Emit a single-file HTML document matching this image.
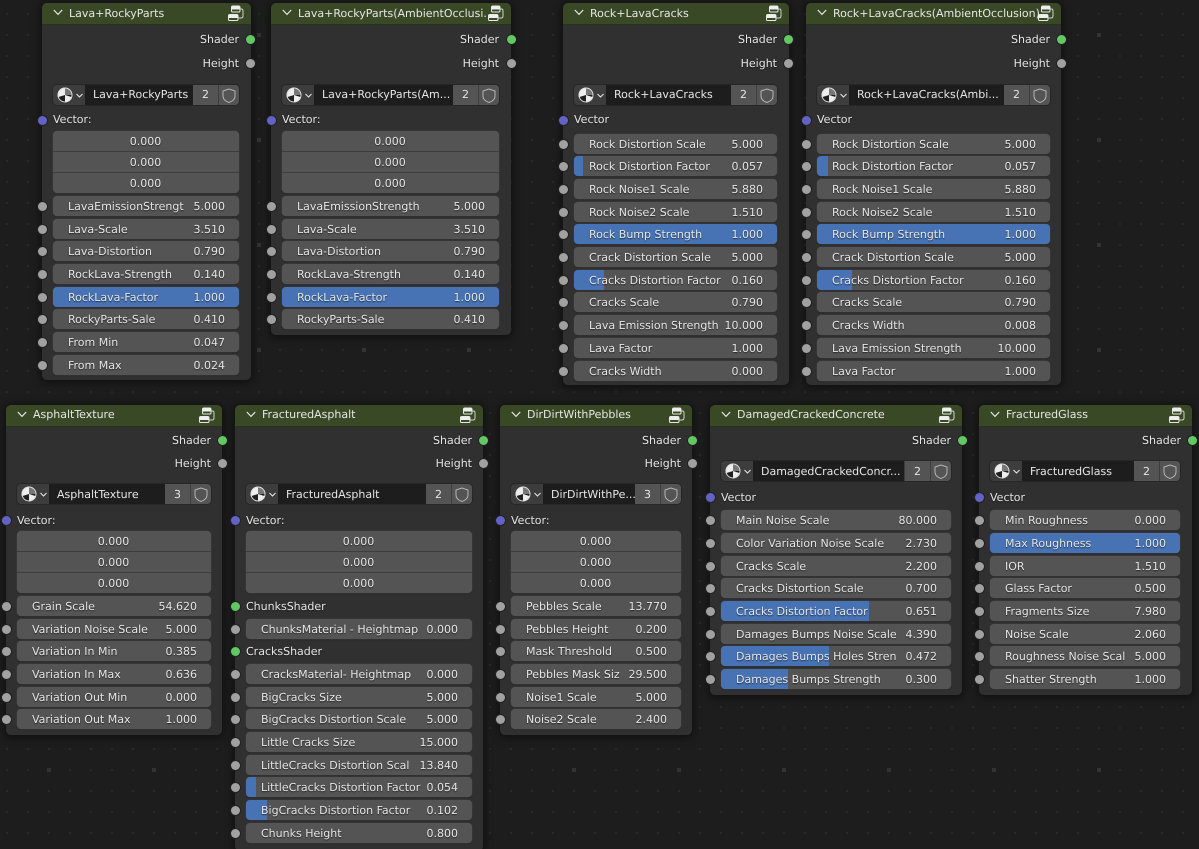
<!DOCTYPE html>
<html><head><meta charset="utf-8"><style>
html,body{margin:0;padding:0;width:1199px;height:849px;overflow:hidden;background:#1d1d1d}
body{position:relative;font:11px/22px "DejaVu Sans",sans-serif;color:#e6e6e6;text-rendering:geometricPrecision}
#bg{position:absolute;left:0;top:0}
.n{position:absolute;background:#303030;border-radius:5px;box-shadow:0 1px 8px 2px rgba(0,0,0,.45)}
.h{position:absolute;left:0;right:0;top:0;height:21px;background:#3a4925;border-radius:5px 5px 0 0;box-shadow:0 1px 0 #293319;line-height:22px;padding-left:27px;white-space:nowrap;overflow:hidden}
.h svg{position:absolute;left:11px;top:6px}
.h svg.g{left:auto;right:7px;top:2px}
.o{position:absolute;height:20px;white-space:nowrap;text-shadow:0 1px 1px rgba(0,0,0,.45)}
.t{text-align:right}
.r{position:absolute;height:20px;z-index:0;background:#545454;border-radius:4px;box-shadow:0 0 0 .5px #3d3d3d,0 1px 1px rgba(0,0,0,.3);padding-left:15px;box-sizing:border-box;white-space:nowrap;text-shadow:0 1px 1px rgba(0,0,0,.6)}
.r span{position:absolute;right:14px;top:0}
.r b{position:absolute;left:0;top:0;bottom:0;z-index:-1;background:#4772b3;border-radius:4px 0 0 4px}
.r b.f{border-radius:4px;right:0}
.z{padding:0 1px 0 0;text-align:center;border-radius:0}
.z1{border-radius:4px 4px 0 0}.z3{border-radius:0 0 4px 4px}
.k::before,.s{content:"";position:absolute;width:9px;height:9px;border-radius:50%;background:#a1a1a1;box-shadow:0 0 0 1px #222}
.k::before{left:-15.5px;top:5.5px}
.s{margin:-4.5px 0 0 -4.5px;z-index:2}
.s.v{background:#6363c7}.s.c{background:#63c763}
.m{position:absolute;height:20px;background:#3d3d3d;border-radius:4px;box-shadow:0 0 0 1px #262626}
.m i{position:absolute;top:0;height:20px;line-height:20px;font-style:normal;text-align:center;background:#545454;box-sizing:border-box}
.l2 ~ .m i{line-height:22px}
.m i.a{left:32px;background:#1d1d1d;text-align:left;padding-left:8px;white-space:nowrap;overflow:hidden}
.m svg{position:absolute}
.l2 .h{line-height:19px}
</style></head><body>
<svg id="bg" width="1199" height="849"><defs>
<pattern id="d" x="6" y="13" width="21" height="21" patternUnits="userSpaceOnUse"><rect width="2" height="2" fill="#282828"/></pattern>
<pattern id="e" x="47" y="33" width="105" height="105" patternUnits="userSpaceOnUse"><rect width="4" height="4" fill="#333"/></pattern>
<symbol id="chev" viewBox="0 0 10 7"><path d="M.8 1 5 5.400 9.200 1" fill="none" stroke="#e6e6e6" stroke-width="1.2"/></symbol>
<symbol id="grp" viewBox="0 0 16 16"><rect x="3.500" y="1" width="8.500" height="6" rx="1.300" fill="none" stroke="#e6e6e6" stroke-width="1"/><path d="M3.500 2.300q0-1.300 1.300-1.300h5.900q1.300 0 1.300 1.300v2.200H3.500Z" fill="#eee"/><rect x=".5" y="9.500" width="9.500" height="6" rx="1.300" fill="none" stroke="#e6e6e6" stroke-width="1"/><path d="M.5 10.800q0-1.300 1.300-1.300h6.900q1.300 0 1.300 1.300v2.200H.5Z" fill="#eee"/><path d="M12 4h1.500q1.500 0 1.500 2v5q0 2-2 2h-3" fill="none" stroke="#d0d0d0" stroke-width="1"/></symbol>
<symbol id="mat" viewBox="0 0 30 16"><circle cx="8" cy="8" r="7.500" fill="#1f1f1f"/><path d="M8 .5A7.500 7.500 0 0 0 .8 10.200L8 8Z" fill="#eee"/><path d="M8 8 8 .5A7.500 7.500 0 0 1 15.500 8Z" fill="#777"/><path d="M8 8 15.200 10.200A7.500 7.500 0 0 1 8 15.500Z" fill="#eee"/><circle cx="8" cy="8" r="7" fill="none" stroke="#ddd" stroke-width="1"/><path d="M19.500 7l3 3 3-3" fill="none" stroke="#e6e6e6" stroke-width="1.100"/></symbol>
<symbol id="sh" viewBox="0 0 14 15"><path d="M7 1 1 3v5c0 3.500 3 5.500 6 6.500 3-1 6-3 6-6.500V3Z" fill="none" stroke="#b5b5b5" stroke-width="1"/></symbol>
</defs><rect width="1199" height="849" fill="#1d1d1d"/><rect width="1199" height="849" fill="url(#d)"/><rect width="1199" height="849" fill="url(#e)"/></svg>

<!-- Node 1 -->
<div class="n" style="left:42px;top:3px;width:209px;height:377px"><div class="h">Lava+RockyParts<svg width="10" height="7"><use href="#chev"/></svg><svg class="g" width="16" height="16"><use href="#grp"/></svg></div></div>
<div class="o t" style="left:140px;width:99px;top:29px">Shader</div><div class="o t" style="left:140px;width:99px;top:53px">Height</div>
<i class="s c" style="left:250px;top:39px"></i><i class="s" style="left:250px;top:63px"></i>
<div class="m" style="left:53px;top:85px;width:186px"><svg style="left:4px;top:2px" width="30" height="16"><use href="#mat"/></svg><i class="a" style="width:108px">Lava+RockyParts</i><i style="left:140px;width:25px">2</i><i style="left:166px;width:20px;border-radius:0 4px 4px 0"><svg style="left:3px;top:3px" width="14" height="15"><use href="#sh"/></svg></i></div>
<i class="s v" style="left:42px;top:120px"></i><div class="o" style="left:53px;top:109px">Vector:</div>
<div class="r z z1" style="left:53px;top:131px;width:186px">0.000</div><div class="r z" style="left:53px;top:152px;width:186px">0.000</div><div class="r z z3" style="left:53px;top:173px;width:186px">0.000</div>
<div class="r k" style="left:53px;top:196px;width:186px">LavaEmissionStrengt<span>5.000</span></div>
<div class="r k" style="left:53px;top:219px;width:186px">Lava-Scale<span>3.510</span></div>
<div class="r k" style="left:53px;top:241px;width:186px">Lava-Distortion<span>0.790</span></div>
<div class="r k" style="left:53px;top:264px;width:186px">RockLava-Strength<span>0.140</span></div>
<div class="r k" style="left:53px;top:287px;width:186px"><b class="f"></b>RockLava-Factor<span>1.000</span></div>
<div class="r k" style="left:53px;top:309px;width:186px">RockyParts-Sale<span>0.410</span></div>
<div class="r k" style="left:53px;top:332px;width:186px">From Min<span>0.047</span></div>
<div class="r k" style="left:53px;top:355px;width:186px">From Max<span>0.024</span></div>

<!-- Node 2 -->
<div class="n" style="left:271px;top:3px;width:240px;height:332px"><div class="h">Lava+RockyParts(AmbientOcclusi...<svg width="10" height="7"><use href="#chev"/></svg><svg class="g" width="16" height="16"><use href="#grp"/></svg></div></div>
<div class="o t" style="left:400px;width:99px;top:29px">Shader</div><div class="o t" style="left:400px;width:99px;top:53px">Height</div>
<i class="s c" style="left:511px;top:39px"></i><i class="s" style="left:511px;top:63px"></i>
<div class="m" style="left:282px;top:85px;width:217px"><svg style="left:4px;top:2px" width="30" height="16"><use href="#mat"/></svg><i class="a" style="width:139px">Lava+RockyParts(Am...</i><i style="left:171px;width:25px">2</i><i style="left:197px;width:20px;border-radius:0 4px 4px 0"><svg style="left:3px;top:3px" width="14" height="15"><use href="#sh"/></svg></i></div>
<i class="s v" style="left:271px;top:120px"></i><div class="o" style="left:282px;top:109px">Vector:</div>
<div class="r z z1" style="left:282px;top:131px;width:217px">0.000</div><div class="r z" style="left:282px;top:152px;width:217px">0.000</div><div class="r z z3" style="left:282px;top:173px;width:217px">0.000</div>
<div class="r k" style="left:282px;top:196px;width:217px">LavaEmissionStrength<span>5.000</span></div>
<div class="r k" style="left:282px;top:219px;width:217px">Lava-Scale<span>3.510</span></div>
<div class="r k" style="left:282px;top:241px;width:217px">Lava-Distortion<span>0.790</span></div>
<div class="r k" style="left:282px;top:264px;width:217px">RockLava-Strength<span>0.140</span></div>
<div class="r k" style="left:282px;top:287px;width:217px"><b class="f"></b>RockLava-Factor<span>1.000</span></div>
<div class="r k" style="left:282px;top:309px;width:217px">RockyParts-Sale<span>0.410</span></div>

<!-- Node 3 -->
<div class="n" style="left:563px;top:3px;width:226px;height:382px"><div class="h">Rock+LavaCracks<svg width="10" height="7"><use href="#chev"/></svg><svg class="g" width="16" height="16"><use href="#grp"/></svg></div></div>
<div class="o t" style="left:678px;width:99px;top:29px">Shader</div><div class="o t" style="left:678px;width:99px;top:53px">Height</div>
<i class="s c" style="left:788px;top:39px"></i><i class="s" style="left:788px;top:63px"></i>
<div class="m" style="left:574px;top:85px;width:203px"><svg style="left:4px;top:2px" width="30" height="16"><use href="#mat"/></svg><i class="a" style="width:125px">Rock+LavaCracks</i><i style="left:157px;width:25px">2</i><i style="left:183px;width:20px;border-radius:0 4px 4px 0"><svg style="left:3px;top:3px" width="14" height="15"><use href="#sh"/></svg></i></div>
<i class="s v" style="left:563px;top:120px"></i><div class="o" style="left:574px;top:109px">Vector</div>
<div class="r k" style="left:574px;top:134px;width:203px">Rock Distortion Scale<span>5.000</span></div>
<div class="r k" style="left:574px;top:156px;width:203px"><b style="width:9px"></b>Rock Distortion Factor<span>0.057</span></div>
<div class="r k" style="left:574px;top:179px;width:203px">Rock Noise1 Scale<span>5.880</span></div>
<div class="r k" style="left:574px;top:202px;width:203px">Rock Noise2 Scale<span>1.510</span></div>
<div class="r k" style="left:574px;top:224px;width:203px"><b class="f"></b>Rock Bump Strength<span>1.000</span></div>
<div class="r k" style="left:574px;top:247px;width:203px">Crack Distortion Scale<span>5.000</span></div>
<div class="r k" style="left:574px;top:270px;width:203px"><b style="width:30px"></b>Cracks Distortion Factor<span>0.160</span></div>
<div class="r k" style="left:574px;top:292px;width:203px">Cracks Scale<span>0.790</span></div>
<div class="r k" style="left:574px;top:315px;width:203px">Lava Emission Strength<span>10.000</span></div>
<div class="r k" style="left:574px;top:338px;width:203px">Lava Factor<span>1.000</span></div>
<div class="r k" style="left:574px;top:361px;width:203px">Cracks Width<span>0.000</span></div>

<!-- Node 4 -->
<div class="n" style="left:806px;top:3px;width:255px;height:382px"><div class="h">Rock+LavaCracks(AmbientOcclusion)<svg width="10" height="7"><use href="#chev"/></svg><svg class="g" width="16" height="16"><use href="#grp"/></svg></div></div>
<div class="o t" style="left:951px;width:99px;top:29px">Shader</div><div class="o t" style="left:951px;width:99px;top:53px">Height</div>
<i class="s c" style="left:1061px;top:39px"></i><i class="s" style="left:1061px;top:63px"></i>
<div class="m" style="left:817px;top:85px;width:233px"><svg style="left:4px;top:2px" width="30" height="16"><use href="#mat"/></svg><i class="a" style="width:155px">Rock+LavaCracks(Ambi...</i><i style="left:187px;width:25px">2</i><i style="left:213px;width:20px;border-radius:0 4px 4px 0"><svg style="left:3px;top:3px" width="14" height="15"><use href="#sh"/></svg></i></div>
<i class="s v" style="left:806px;top:120px"></i><div class="o" style="left:817px;top:109px">Vector</div>
<div class="r k" style="left:817px;top:134px;width:233px">Rock Distortion Scale<span>5.000</span></div>
<div class="r k" style="left:817px;top:156px;width:233px"><b style="width:11px"></b>Rock Distortion Factor<span>0.057</span></div>
<div class="r k" style="left:817px;top:179px;width:233px">Rock Noise1 Scale<span>5.880</span></div>
<div class="r k" style="left:817px;top:202px;width:233px">Rock Noise2 Scale<span>1.510</span></div>
<div class="r k" style="left:817px;top:224px;width:233px"><b class="f"></b>Rock Bump Strength<span>1.000</span></div>
<div class="r k" style="left:817px;top:247px;width:233px">Crack Distortion Scale<span>5.000</span></div>
<div class="r k" style="left:817px;top:270px;width:233px"><b style="width:35px"></b>Cracks Distortion Factor<span>0.160</span></div>
<div class="r k" style="left:817px;top:292px;width:233px">Cracks Scale<span>0.790</span></div>
<div class="r k" style="left:817px;top:315px;width:233px">Cracks Width<span>0.008</span></div>
<div class="r k" style="left:817px;top:338px;width:233px">Lava Emission Strength<span>10.000</span></div>
<div class="r k" style="left:817px;top:361px;width:233px">Lava Factor<span>1.000</span></div>

<!-- Node 5 -->
<div class="n l2" style="left:6px;top:405px;width:216px;height:330px"><div class="h">AsphaltTexture<svg width="10" height="7"><use href="#chev"/></svg><svg class="g" width="16" height="16"><use href="#grp"/></svg></div></div>
<div class="o t" style="left:112px;width:99px;top:430px">Shader</div><div class="o t" style="left:112px;width:99px;top:453px">Height</div>
<i class="s c" style="left:222px;top:440px"></i><i class="s" style="left:222px;top:463px"></i>
<div class="m" style="left:17px;top:484px;width:194px"><svg style="left:4px;top:2px" width="30" height="16"><use href="#mat"/></svg><i class="a" style="width:116px">AsphaltTexture</i><i style="left:148px;width:25px">3</i><i style="left:174px;width:20px;border-radius:0 4px 4px 0"><svg style="left:3px;top:3px" width="14" height="15"><use href="#sh"/></svg></i></div>
<i class="s v" style="left:6px;top:520px"></i><div class="o" style="left:17px;top:510px">Vector:</div>
<div class="r z z1" style="left:17px;top:531px;width:194px">0.000</div><div class="r z" style="left:17px;top:552px;width:194px">0.000</div><div class="r z z3" style="left:17px;top:573px;width:194px">0.000</div>
<div class="r k" style="left:17px;top:596px;width:194px">Grain Scale<span>54.620</span></div>
<div class="r k" style="left:17px;top:619px;width:194px">Variation Noise Scale<span>5.000</span></div>
<div class="r k" style="left:17px;top:641px;width:194px">Variation In Min<span>0.385</span></div>
<div class="r k" style="left:17px;top:664px;width:194px">Variation In Max<span>0.636</span></div>
<div class="r k" style="left:17px;top:687px;width:194px">Variation Out Min<span>0.000</span></div>
<div class="r k" style="left:17px;top:709px;width:194px">Variation Out Max<span>1.000</span></div>

<!-- Node 6 -->
<div class="n l2" style="left:235px;top:405px;width:248px;height:446px"><div class="h">FracturedAsphalt<svg width="10" height="7"><use href="#chev"/></svg><svg class="g" width="16" height="16"><use href="#grp"/></svg></div></div>
<div class="o t" style="left:373px;width:99px;top:430px">Shader</div><div class="o t" style="left:373px;width:99px;top:453px">Height</div>
<i class="s c" style="left:483px;top:440px"></i><i class="s" style="left:483px;top:463px"></i>
<div class="m" style="left:246px;top:484px;width:226px"><svg style="left:4px;top:2px" width="30" height="16"><use href="#mat"/></svg><i class="a" style="width:148px">FracturedAsphalt</i><i style="left:180px;width:25px">2</i><i style="left:206px;width:20px;border-radius:0 4px 4px 0"><svg style="left:3px;top:3px" width="14" height="15"><use href="#sh"/></svg></i></div>
<i class="s v" style="left:235px;top:520px"></i><div class="o" style="left:246px;top:510px">Vector:</div>
<div class="r z z1" style="left:246px;top:531px;width:226px">0.000</div><div class="r z" style="left:246px;top:552px;width:226px">0.000</div><div class="r z z3" style="left:246px;top:573px;width:226px">0.000</div>
<i class="s c" style="left:235px;top:606px"></i><div class="o" style="left:246px;top:596px">ChunksShader</div>
<div class="r k" style="left:246px;top:619px;width:226px">ChunksMaterial - Heightmap<span>0.000</span></div>
<i class="s c" style="left:235px;top:651px"></i><div class="o" style="left:246px;top:641px">CracksShader</div>
<div class="r k" style="left:246px;top:664px;width:226px">CracksMaterial- Heightmap<span>0.000</span></div>
<div class="r k" style="left:246px;top:687px;width:226px">BigCracks Size<span>5.000</span></div>
<div class="r k" style="left:246px;top:709px;width:226px">BigCracks Distortion Scale<span>5.000</span></div>
<div class="r k" style="left:246px;top:732px;width:226px">Little Cracks Size<span>15.000</span></div>
<div class="r k" style="left:246px;top:755px;width:226px">LittleCracks Distortion Scal<span>13.840</span></div>
<div class="r k" style="left:246px;top:777px;width:226px"><b style="width:10px"></b>LittleCracks Distortion Factor<span>0.054</span></div>
<div class="r k" style="left:246px;top:800px;width:226px"><b style="width:21px"></b>BigCracks Distortion Factor<span>0.102</span></div>
<div class="r k" style="left:246px;top:823px;width:226px">Chunks Height<span>0.800</span></div>

<!-- Node 7 -->
<div class="n l2" style="left:500px;top:405px;width:192px;height:330px"><div class="h">DirDirtWithPebbles<svg width="10" height="7"><use href="#chev"/></svg><svg class="g" width="16" height="16"><use href="#grp"/></svg></div></div>
<div class="o t" style="left:582px;width:99px;top:430px">Shader</div><div class="o t" style="left:582px;width:99px;top:453px">Height</div>
<i class="s c" style="left:692px;top:440px"></i><i class="s" style="left:692px;top:463px"></i>
<div class="m" style="left:511px;top:484px;width:170px"><svg style="left:4px;top:2px" width="30" height="16"><use href="#mat"/></svg><i class="a" style="width:92px">DirDirtWithPe...</i><i style="left:124px;width:25px">3</i><i style="left:150px;width:20px;border-radius:0 4px 4px 0"><svg style="left:3px;top:3px" width="14" height="15"><use href="#sh"/></svg></i></div>
<i class="s v" style="left:500px;top:520px"></i><div class="o" style="left:511px;top:510px">Vector:</div>
<div class="r z z1" style="left:511px;top:531px;width:170px">0.000</div><div class="r z" style="left:511px;top:552px;width:170px">0.000</div><div class="r z z3" style="left:511px;top:573px;width:170px">0.000</div>
<div class="r k" style="left:511px;top:596px;width:170px">Pebbles Scale<span>13.770</span></div>
<div class="r k" style="left:511px;top:619px;width:170px">Pebbles Height<span>0.200</span></div>
<div class="r k" style="left:511px;top:641px;width:170px">Mask Threshold<span>0.500</span></div>
<div class="r k" style="left:511px;top:664px;width:170px">Pebbles Mask Siz<span>29.500</span></div>
<div class="r k" style="left:511px;top:687px;width:170px">Noise1 Scale<span>5.000</span></div>
<div class="r k" style="left:511px;top:709px;width:170px">Noise2 Scale<span>2.400</span></div>

<!-- Node 8 -->
<div class="n l2" style="left:710px;top:405px;width:252px;height:290px"><div class="h">DamagedCrackedConcrete<svg width="10" height="7"><use href="#chev"/></svg><svg class="g" width="16" height="16"><use href="#grp"/></svg></div></div>
<div class="o t" style="left:852px;width:99px;top:430px">Shader</div>
<i class="s c" style="left:962px;top:440px"></i>
<div class="m" style="left:721px;top:461px;width:230px"><svg style="left:4px;top:2px" width="30" height="16"><use href="#mat"/></svg><i class="a" style="width:151px">DamagedCrackedConcr...</i><i style="left:184px;width:25px">2</i><i style="left:210px;width:20px;border-radius:0 4px 4px 0"><svg style="left:3px;top:3px" width="14" height="15"><use href="#sh"/></svg></i></div>
<i class="s v" style="left:710px;top:497px"></i><div class="o" style="left:721px;top:487px">Vector</div>
<div class="r k" style="left:721px;top:510px;width:230px">Main Noise Scale<span>80.000</span></div>
<div class="r k" style="left:721px;top:533px;width:230px">Color Variation Noise Scale<span>2.730</span></div>
<div class="r k" style="left:721px;top:556px;width:230px">Cracks Scale<span>2.200</span></div>
<div class="r k" style="left:721px;top:578px;width:230px">Cracks Distortion Scale<span>0.700</span></div>
<div class="r k" style="left:721px;top:601px;width:230px"><b style="width:148px"></b>Cracks Distortion Factor<span>0.651</span></div>
<div class="r k" style="left:721px;top:624px;width:230px">Damages Bumps Noise Scale<span>4.390</span></div>
<div class="r k" style="left:721px;top:646px;width:230px"><b style="width:108px"></b>Damages Bumps Holes Stren<span>0.472</span></div>
<div class="r k" style="left:721px;top:669px;width:230px"><b style="width:67px"></b>Damages Bumps Strength<span>0.300</span></div>

<!-- Node 9 -->
<div class="n l2" style="left:979px;top:405px;width:213px;height:290px"><div class="h">FracturedGlass<svg width="10" height="7"><use href="#chev"/></svg><svg class="g" width="16" height="16"><use href="#grp"/></svg></div></div>
<div class="o t" style="left:1082px;width:99px;top:430px">Shader</div>
<i class="s c" style="left:1192px;top:440px"></i>
<div class="m" style="left:990px;top:461px;width:190px"><svg style="left:4px;top:2px" width="30" height="16"><use href="#mat"/></svg><i class="a" style="width:112px">FracturedGlass</i><i style="left:144px;width:25px">2</i><i style="left:170px;width:20px;border-radius:0 4px 4px 0"><svg style="left:3px;top:3px" width="14" height="15"><use href="#sh"/></svg></i></div>
<i class="s v" style="left:979px;top:497px"></i><div class="o" style="left:990px;top:487px">Vector</div>
<div class="r k" style="left:990px;top:510px;width:190px">Min Roughness<span>0.000</span></div>
<div class="r k" style="left:990px;top:533px;width:190px"><b class="f"></b>Max Roughness<span>1.000</span></div>
<div class="r k" style="left:990px;top:556px;width:190px">IOR<span>1.510</span></div>
<div class="r k" style="left:990px;top:578px;width:190px">Glass Factor<span>0.500</span></div>
<div class="r k" style="left:990px;top:601px;width:190px">Fragments Size<span>7.980</span></div>
<div class="r k" style="left:990px;top:624px;width:190px">Noise Scale<span>2.060</span></div>
<div class="r k" style="left:990px;top:646px;width:190px">Roughness Noise Scal<span>5.000</span></div>
<div class="r k" style="left:990px;top:669px;width:190px">Shatter Strength<span>1.000</span></div>
</body></html>
